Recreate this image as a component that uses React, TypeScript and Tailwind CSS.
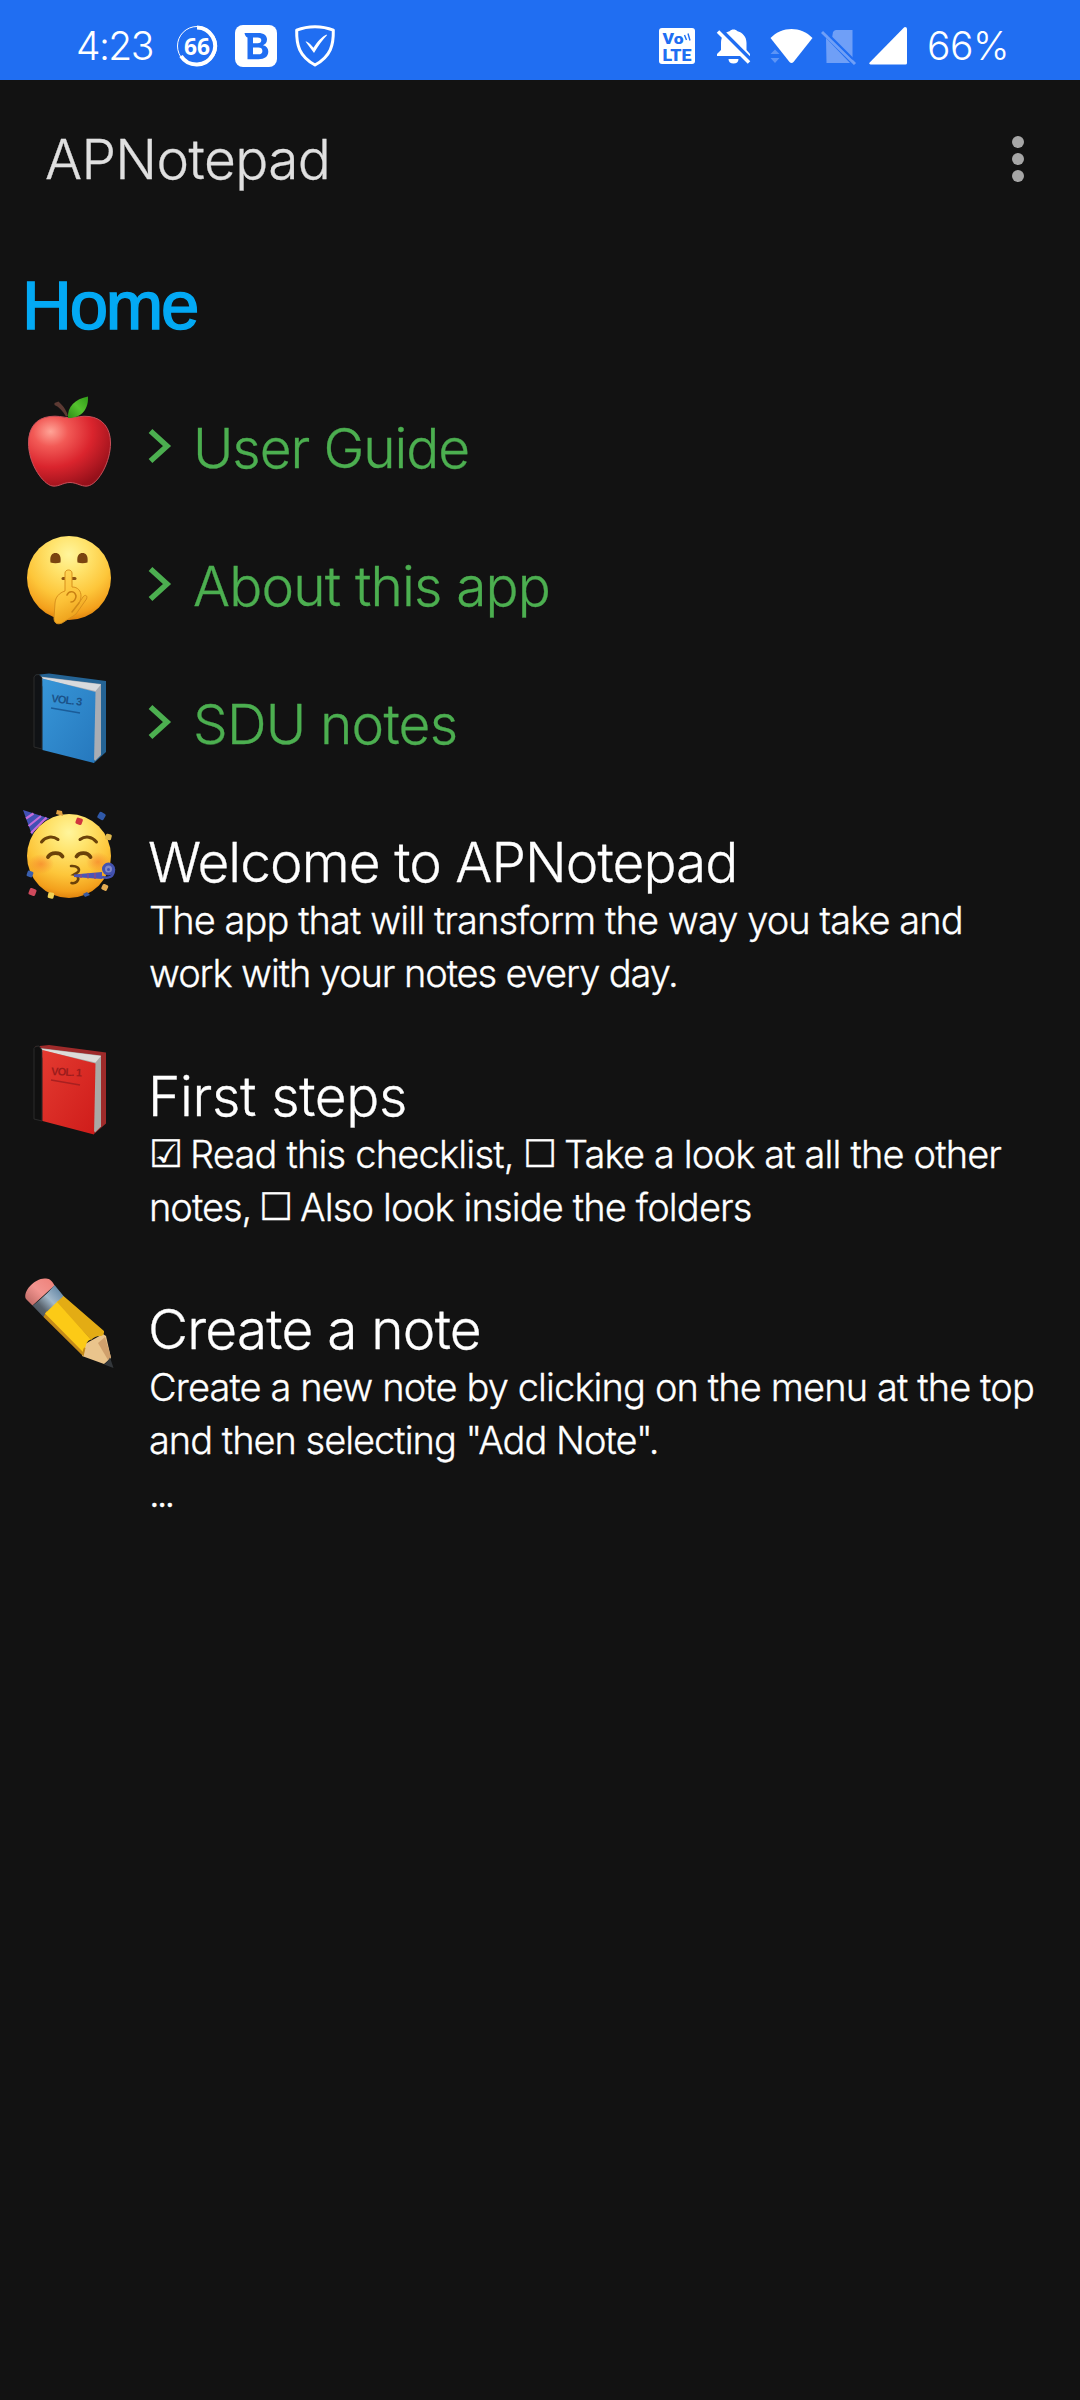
import type { ReactNode } from "react";

function BatteryRing() {
  return (
    <svg width="42" height="42" viewBox="0 0 42 42" className="ml-[24px]">
      <circle cx="21" cy="21" r="19.5" fill="none" stroke="#fff" strokeWidth="1" />
      <path d="M21 2.5A18.500 18.500 0 1 1 5 31" fill="none" stroke="#fff" strokeWidth="4" />
      <text x="21" y="29.5" textAnchor="middle" fontFamily="Open Sans, sans-serif" fontWeight="700" fontSize="23" textLength="26" lengthAdjust="spacingAndGlyphs" fill="#fff">66</text>
    </svg>
  );
}

function BadgeB() {
  return (
    <svg width="42" height="42" viewBox="0 0 42 42" className="ml-[17px]">
      <rect width="42" height="42" rx="8" fill="#fff" />
      <path
        fillRule="evenodd"
        fill="#206ef2"
        d="M9.500 8H23c6 0 9 2.700 9 6.600 0 3-1.600 4.900-4 5.600 3.400.8 5.300 3 5.300 6.400 0 5-3.700 7.700-9.800 7.700H12.500V12.500C11 12 10 10.500 9.500 8zM18 12.500v5.700h4.600c2.500 0 3.700-1 3.700-2.900s-1.200-2.800-3.700-2.800zm0 10v6.800h5.300c2.700 0 4.100-1.200 4.100-3.400s-1.400-3.400-4.100-3.400z"
      />
    </svg>
  );
}

function Shield() {
  return (
    <svg width="42" height="42" viewBox="0 0 42 42" className="ml-[17px]">
      <path d="M21 1.700C27 1.700 34 3 39.300 5.200 39.600 20 37 31 21 40 5 31 2.400 20 2.700 5.200 8 3 15 1.700 21 1.700z" fill="none" stroke="#fff" strokeWidth="3" strokeLinejoin="round" />
      <path d="M11.500 16.500c2 0 3.500 1.200 8 6.200C23.500 16.500 28 11.500 32.500 9.500l.5.800C28.500 15 24 21 20 28z" fill="#fff" />
    </svg>
  );
}

function VoLte() {
  return (
    <svg width="36" height="36" viewBox="0 0 36 36" className="mt-[28px]">
      <rect width="36" height="36" rx="3" fill="#fff" />
      <g fontFamily="Roboto, sans-serif" fontWeight="900" fill="#206ef2">
        <text x="3.500" y="16" fontSize="15.500" textLength="21" lengthAdjust="spacingAndGlyphs">Vo</text>
        <text x="3.500" y="32.500" fontSize="17" textLength="29" lengthAdjust="spacingAndGlyphs">LTE</text>
      </g>
      <path d="M25.500 7l2 5M29 5.500l2 7" stroke="#206ef2" strokeWidth="1.400" fill="none" />
    </svg>
  );
}

function BellOff() {
  return (
    <svg width="36" height="36" viewBox="0 0 36 36" className="mt-[29px] ml-[21px]">
      <path d="M1 27v-2l4-4v-7C5 7.500 8.500 3.500 14 2c1-2 6-2 7 0 5.500 1.500 9.500 5.500 9.500 12v7l3.500 4v2zM12.500 30h10c0 3-2 4.500-5 4.500s-5-1.500-5-4.500z" fill="#fff" />
      <path d="M5 1l30 30" stroke="#206ef2" strokeWidth="4" />
      <path d="M2 2.500l31 31" stroke="#fff" strokeWidth="3.500" />
    </svg>
  );
}

function Wifi() {
  return (
    <svg width="44" height="36" viewBox="0 0 44 36" className="mt-[29px] ml-[17px]">
      <path d="M1.500 9C13-3 32-3 43.500 9L24.500 33q-2 2-4 0z" fill="#fff" />
      <path d="M1.500 25l4.500-4.500 4.500 4.500zM1.500 29l4.500 5 4.500-5z" fill="#5c94f6" />
    </svg>
  );
}

function SimOff() {
  return (
    <svg width="36" height="36" viewBox="0 0 36 36" className="mt-[29px] ml-[8px]">
      <path d="M12 3q1.500-2 3-2h16.500v29L11 9zM5 9l24 25H5.500z" fill="#6f9ff7" />
      <path d="M1 3l33 32" stroke="#6f9ff7" strokeWidth="3" />
      <path d="M8 6l24 24" stroke="#206ef2" strokeWidth="2" />
    </svg>
  );
}

function Signal() {
  return (
    <svg width="38" height="38" viewBox="0 0 38 38" className="mt-[27px] ml-[12px]">
      <path d="M36 0q2 0 2 2v34q0 1.500-1.500 1.500H1.500q-2-.5-.8-2L35 .5z" fill="#fff" />
    </svg>
  );
}

function Emoji({ children }: { children: ReactNode }) {
  return (
    <svg width="100" height="110" viewBox="0 0 100 110" className="mt-[10px] ml-[20px] shrink-0">
      {children}
    </svg>
  );
}

function FaceGradient({ id }: { id: string }) {
  return (
    <radialGradient id={id} cx="0.5" cy="0.22" r="0.78">
      <stop offset="0" stopColor="#fff59c" />
      <stop offset="0.3" stopColor="#ffe36c" />
      <stop offset="0.65" stopColor="#fdc63a" />
      <stop offset="0.9" stopColor="#f3a01c" />
      <stop offset="1" stopColor="#e0840e" />
    </radialGradient>
  );
}

function Apple() {
  return (
    <Emoji>
      <defs>
        <radialGradient id="apple" cx="0.27" cy="0.22" r="0.85">
          <stop offset="0" stopColor="#ffa497" />
          <stop offset="0.25" stopColor="#f25a56" />
          <stop offset="0.6" stopColor="#da242d" />
          <stop offset="1" stopColor="#96101a" />
        </radialGradient>
        <linearGradient id="leaf" x1="0" y1="1" x2="1" y2="0">
          <stop offset="0" stopColor="#2e8c16" />
          <stop offset="0.5" stopColor="#55c22e" />
          <stop offset="1" stopColor="#2f9a18" />
        </linearGradient>
      </defs>
      <path d="M50 28C42 27 37 25.500 30 26.500 16 28 8.500 38 8.500 53c0 19 12 38 22 42.500 7 2.500 12-3 19.500-3s13 5.500 19.500 3C79 92 90.500 72 90.500 53c0-15-8-25-21.500-26.500-7-1-12 1-19 1.500z" fill="url(#apple)" stroke="#c9505a" strokeWidth="1" />
      <path d="M34.500 13l4-1.500c4 3.500 8 8.500 9.500 14.500l-2 .5C43 21 39 17 34.500 15z" fill="#5d3a33" />
      <path d="M48 28c-1-11 7-19 20-21.500C68.500 18 63 28 48 28z" fill="url(#leaf)" />
    </Emoji>
  );
}

function Shushing() {
  return (
    <Emoji>
      <defs>
        <FaceGradient id="face-shush" />
        <linearGradient id="hand" x1="0" y1="0" x2="0.3" y2="1">
          <stop offset="0" stopColor="#ffd85a" />
          <stop offset="0.6" stopColor="#fcc238" />
          <stop offset="1" stopColor="#eea01a" />
        </linearGradient>
      </defs>
      <circle cx="49" cy="50" r="42" fill="url(#face-shush)" />
      <path d="M30.500 34.500c-1-7.500 2-9.500 5-9.500s6 2 5 9.500c-3 1-7 1-10 0zM57.500 34.500c-1-7.500 2-9.500 5-9.500s6 2 5 9.500c-3 1-7 1-10 0z" fill="#7a4410" />
      <path d="M43 50.500h12" stroke="#8a5212" strokeWidth="3" strokeLinecap="round" />
      <path d="M45 63V45c0-4 7-4 7 0v14c6 0 9 4 9 9 0 3-1 5-2 7l4-6c2-3 5-1.500 3.500 2L56 86c-4 3-8 5-14 9-5 2-8 0-8-5l1-15c.5-6 4-10 10-12z" fill="url(#hand)" stroke="#d8901c" strokeWidth="1" />
      <path d="M47 67c2-5 8-4 9 1 0 3-2 6-5 6" fill="none" stroke="#c98114" strokeWidth="1.600" strokeLinecap="round" />
      <path d="M59 75l-7 9" fill="none" stroke="#d08a18" strokeWidth="1.500" strokeLinecap="round" />
    </Emoji>
  );
}

function BlueBook() {
  return (
    <Emoji>
      <defs>
        <linearGradient id="cover-blue" x1="0" y1="0" x2="1" y2="1">
          <stop offset="0" stopColor="#3796d8" />
          <stop offset="1" stopColor="#2678bd" />
        </linearGradient>
      </defs>
      <path d="M15 9l14-1.500L86 15v71L74 97z" fill="#246394" />
      <path d="M20 10.500l61 7.500v71l-6 6z" fill="#a9adb4" />
      <path d="M20 11l61 7.500-5.500 6.500L23 13z" fill="#d8dadd" />
      <path d="M14 11q1-3 5-2.500L22 12v71l-8-2z" fill="#101215" stroke="#2b2b2b" strokeWidth="1" />
      <path d="M22.500 12.500L75.500 26 74 97 22.500 84z" fill="url(#cover-blue)" />
      <text x="31" y="36" transform="rotate(7 31 36)" fontFamily="Liberation Sans, sans-serif" fontWeight="700" fontSize="11" textLength="31" fill="#1b5288">VOL. 3</text>
      <path d="M31 42l29 5" stroke="#1b5c98" strokeWidth="1.600" />
    </Emoji>
  );
}

function RedBook() {
  return (
    <Emoji>
      <defs>
        <linearGradient id="cover-red" x1="0" y1="0" x2="1" y2="1">
          <stop offset="0" stopColor="#e33a30" />
          <stop offset="1" stopColor="#cf1c1a" />
        </linearGradient>
      </defs>
      <path d="M15 8.500l14-1.500L86 14.500v71L74 96z" fill="#9e2a2a" />
      <path d="M20 10l61 7.500v71l-6 6z" fill="#aaa9a6" />
      <path d="M20 10.500l61 7.500-5.500 6.500L23 12.500z" fill="#dddcd9" />
      <path d="M14 10.500q1-3 5-2.500l3 4v71l-8-2z" fill="#101010" stroke="#2b2b2b" strokeWidth="1" />
      <path d="M22.500 12L75.500 25.500 74 96.500 22.500 83z" fill="url(#cover-red)" />
      <text x="31" y="37" transform="rotate(3 31 37)" fontFamily="Liberation Sans, sans-serif" fontWeight="700" fontSize="11" textLength="31" fill="#9c1c1c">VOL. 1</text>
      <path d="M31 42l29 5" stroke="#a82020" strokeWidth="1.400" />
    </Emoji>
  );
}

function Party() {
  return (
    <Emoji>
      <defs>
        <FaceGradient id="face-party" />
        <radialGradient id="blush">
          <stop offset="0" stopColor="#f5772a" stopOpacity="0.6" />
          <stop offset="1" stopColor="#f5772a" stopOpacity="0" />
        </radialGradient>
      </defs>
      <circle cx="49" cy="52" r="42" fill="url(#face-party)" />
      <ellipse cx="21" cy="60" rx="13" ry="10" fill="url(#blush)" />
      <ellipse cx="78" cy="58" rx="12" ry="10" fill="url(#blush)" />
      <path d="M3 6l26.500 8.500Q18 19 12 31z" fill="#4250b4" />
      <path d="M6 14.500l7.500-5M8.500 22L21 12M11 29l15.500-15.500" stroke="#c46bd8" strokeWidth="2.200" fill="none" />
      <g fill="none" stroke="#6b4209" strokeLinecap="round">
        <path d="M21.500 38c4-5.500 11-6.500 16.500-2.500M60 35.500c5.500-4 12-3 16.500 2.500" strokeWidth="3" />
        <path d="M28 53c3-5 12-5 14.500-.500M56.500 52.500c3-4.500 11-4.500 14 .5" strokeWidth="3.800" />
        <path d="M51 62c6-.500 9 2.500 7.500 5.500-1 1.500-3 2-4.500 3 4 .500 5.500 4.500 3 7-1.500 1.500-3.500 2-5.500 1.500" strokeWidth="2.600" />
      </g>
      <path d="M54 70.500l28-2.500v7l-28-2z" fill="#4d55b5" />
      <path d="M61 70v4M68 69.500v5M75 69v6" stroke="#8a4b86" strokeWidth="1.500" />
      <circle cx="88.500" cy="65" r="5" fill="#8188c8" stroke="#4352b0" strokeWidth="3" />
      <circle cx="88.500" cy="65.500" r="1.500" fill="#4352b0" />
      <path d="M82 73c7 2 12 0 12-8" fill="none" stroke="#4352b0" strokeWidth="2.500" />
      <path d="M37 6l5 1 1 5-7-2z" fill="#e0a040" />
      <rect x="56" y="14" width="6.500" height="6.500" rx="1.500" transform="rotate(20 59 17)" fill="#d0353f" />
      <rect x="78" y="8.500" width="7" height="7" rx="1.500" transform="rotate(30 81.500 12)" fill="#2f58a8" />
      <rect x="85.500" y="30" width="6" height="6" rx="1.500" transform="rotate(15 88.500 33)" fill="#e0b84c" />
      <rect x="7" y="67" width="6" height="6" rx="1.500" transform="rotate(20 10 70)" fill="#3a5fae" />
      <rect x="9" y="84.500" width="7" height="7" rx="1.500" transform="rotate(20 12.500 88)" fill="#cf4a5c" />
      <rect x="28" y="88.500" width="6" height="6" rx="1.500" transform="rotate(12 31 91)" fill="#f0d257" />
      <rect x="82" y="80.500" width="6" height="6" rx="1.500" transform="rotate(25 85 83)" fill="#e5ac52" />
      <path d="M63 90l4-2 3 3-5 2z" fill="#3a5aa0" />
    </Emoji>
  );
}

function Pencil() {
  return (
    <Emoji>
      <defs>
        <linearGradient id="metal" x1="0" y1="1" x2="1" y2="0">
          <stop offset="0" stopColor="#3e4852" />
          <stop offset="0.3" stopColor="#59636d" />
          <stop offset="0.55" stopColor="#a3b9cb" />
          <stop offset="1" stopColor="#4b7396" />
        </linearGradient>
        <linearGradient id="eraser" x1="0" y1="1" x2="1" y2="0">
          <stop offset="0" stopColor="#b5635e" />
          <stop offset="0.5" stopColor="#f2948f" />
          <stop offset="1" stopColor="#ee8078" />
        </linearGradient>
      </defs>
      <path d="M12.500 34.500L6 28C2 20 16 6 26 7.500c4 0 7 3.500 8.500 7z" fill="url(#eraser)" />
      <path d="M62 85l3-12 18-10 3 2 5 22-7 6z" fill="#eac48c" />
      <path d="M85 66l6 20-3 3-10-17z" fill="#d0a06c" />
      <path d="M12.500 34.500C18 31 29 21 34.500 14L44 25.500 23.500 46z" fill="url(#metal)" />
      <path d="M23.500 46l3-6 39 37-2 8.500z" fill="#c58a18" />
      <path d="M25 42.500l13-12.500 33 38.500q-5 1.500-5.500 7.500-3 1-2.500 5z" fill="#fcca16" />
      <path d="M37 31l6.500-6L84 60q.5 5-4 5-5 0-9 4z" fill="#e3ac14" />
      <path d="M90 86.500L93.500 97 84 93.500c2-1 4-4 6-7z" fill="#33373b" />
    </Emoji>
  );
}

function Folder({ icon, children }: { icon: ReactNode; children: ReactNode }) {
  return (
    <li className="flex h-[138px]">
      {icon}
      <svg width="24" height="38" viewBox="0 0 24 38" className="mt-[47px] ml-[28px]" fill="none">
        <path d="M2.500 4L19 19 2.500 34" stroke="#4caf50" strokeWidth="5.500" />
      </svg>
      <div className="mt-[36px] ml-[21px] text-[55px] leading-[64px] text-[#4caf50]">{children}</div>
    </li>
  );
}

function Note({ icon, title, children }: { icon: ReactNode; title: ReactNode; children: ReactNode }) {
  return (
    <li className="flex h-[233.500px]">
      {icon}
      <div className="mt-[36px] ml-[28px]">
        <h2 className="text-[55px] leading-[64px]">{title}</h2>
        <div className="ml-px text-[38px] leading-[53px]">{children}</div>
      </div>
    </li>
  );
}

function Box({ checked = false }: { checked?: boolean }) {
  return <span className="inline-block w-[41px] shrink-0 font-['DejaVu_Sans']">{checked ? "☑" : "☐"}</span>;
}

export default function App() {
  return (
    <main className="h-[2400px] w-[1080px] overflow-hidden bg-[#121212] font-['Inter','DejaVu_Sans',sans-serif] font-light whitespace-nowrap text-white [-webkit-text-stroke:0.300px_currentColor]">
      <header className="flex h-[80px] items-start bg-[#206ef2] [-webkit-text-stroke:0px]">
        <div className="flex w-[659px] pt-[25px] pl-[76px]">
          <div className="w-[76px] text-[39px] leading-[42px] tracking-[-1.600px]">4:23</div>
          <BatteryRing />
          <BadgeB />
          <Shield />
        </div>
        <VoLte />
        <BellOff />
        <Wifi />
        <SimOff />
        <Signal />
        <div className="mt-[25px] ml-[20px] text-[39px] leading-[42px] tracking-[-0.500px]">66%</div>
      </header>

      <div className="flex h-[158px] items-center justify-between pr-[56px] pl-[45px]">
        <h1 className="text-[55px] leading-[64px] tracking-[-0.600px] text-[#e0e0e0]">APNotepad</h1>
        <div className="flex flex-col gap-[5px]">
          <i className="size-[12px] rounded-full bg-[#a6a6a6]" />
          <i className="size-[12px] rounded-full bg-[#a6a6a6]" />
          <i className="size-[12px] rounded-full bg-[#a6a6a6]" />
        </div>
      </div>

      <div className="h-[142px] pt-[28px] pl-[22px] font-['Liberation_Sans'] text-[69px] leading-[80px] font-normal tracking-[-2.200px] text-[#03a9f4] [-webkit-text-stroke:1.500px_#03a9f4]">Home</div>

      <ul>
        <Folder icon={<Apple />}><span className="tracking-[-1.100px]">User Guide</span></Folder>
        <Folder icon={<Shushing />}><span className="tracking-[-0.850px]">About this app</span></Folder>
        <Folder icon={<BlueBook />}><span className="tracking-[-0.800px]">SDU notes</span></Folder>
        <Note icon={<Party />} title={<span className="tracking-[-0.950px]">Welcome to APNotepad</span>}>
          <p className="tracking-[-0.920px]">The app that will transform the way you take and</p>
          <p className="tracking-[-1.100px]">work with your notes every day.</p>
        </Note>
        <Note icon={<RedBook />} title={<span className="tracking-[-0.350px]">First steps</span>}>
          <p className="flex">
            <Box checked />
            <span className="w-[333px] tracking-[-0.800px]">Read this checklist,</span>
            <Box />
            <span className="tracking-[-0.850px]">Take a look at all the other</span>
          </p>
          <p className="flex">
            <span className="w-[110px] tracking-[-1px]">notes,</span>
            <Box />
            <span className="tracking-[-0.850px]">Also look inside the folders</span>
          </p>
        </Note>
        <Note icon={<Pencil />} title={<span className="tracking-[-0.800px]">Create a note</span>}>
          <p className="tracking-[-0.880px]">Create a new note by clicking on the menu at the top</p>
          <p className="tracking-[-1px]">and then selecting "Add Note".</p>
          <p className="tracking-[-3px]">...</p>
        </Note>
      </ul>
    </main>
  );
}
